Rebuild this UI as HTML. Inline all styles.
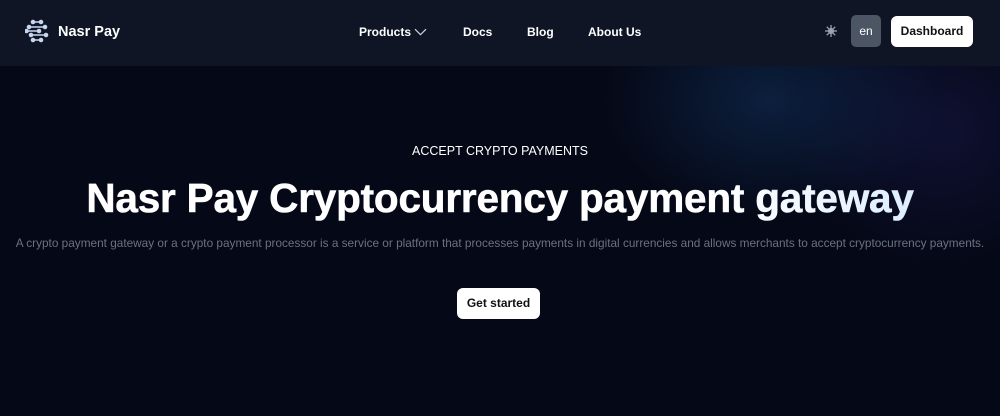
<!DOCTYPE html>
<html><head><meta charset="utf-8"><style>
*{margin:0;padding:0;box-sizing:border-box}
body{width:1000px;height:416px;overflow:hidden;font-family:"Liberation Sans",sans-serif;background:#050816;position:relative;color:#fff}
.glow{position:absolute;left:0;top:0;width:1000px;height:416px;background:radial-gradient(ellipse 170px 120px at 770px 100px,rgba(20,60,110,.45),transparent 100%),radial-gradient(ellipse 150px 140px at 940px 130px,rgba(30,30,90,.4),transparent 100%)}
nav{position:absolute;left:0;top:0;width:1000px;height:66px;background:#0f1524}
.logo{position:absolute;left:25px;top:19px}
.brand{position:absolute;left:58px;top:24px;font-weight:bold;font-size:14.5px}
.links a{position:absolute;top:25px;font-size:12px;font-weight:bold;color:#fff}
.en{position:absolute;left:851px;top:15px;width:30px;height:32px;background:#4b5563;border-radius:5px;font-size:12px;text-align:center;line-height:32px}
.dash{position:absolute;left:891px;top:16px;width:82px;height:31px;background:#fff;border-radius:6px;color:#111;font-size:12px;font-weight:bold;text-align:center;line-height:31px}
.kick{position:absolute;top:144px;width:1000px;text-align:center;font-size:12.5px}
h1{position:absolute;top:175px;width:1000px;text-align:center;font-size:40.5px;font-weight:900;letter-spacing:-.2px;-webkit-text-stroke:.6px currentColor;background:linear-gradient(90deg,#fff 0%,#fff 72%,#e0efff 90%);-webkit-background-clip:text;color:transparent}
.sub{position:absolute;top:236px;width:1000px;text-align:center;font-size:11.8px;color:#6b7280}
.btn{position:absolute;left:457px;top:288px;width:83px;height:31px;background:#fff;border-radius:6px;color:#111;font-size:12px;font-weight:bold;text-align:center;line-height:31px}
</style></head><body>
<div class="glow"></div>
<nav>
<svg class="logo" width="24" height="24" viewBox="0 0 24 24" fill="none" stroke="#c7d7f0" stroke-width="1.6" stroke-linecap="round">
<line x1="8" y1="3" x2="16" y2="3"/><line x1="4" y1="8" x2="20" y2="8"/><line x1="1" y1="12" x2="14" y2="12"/><line x1="6" y1="16" x2="21" y2="16"/><line x1="8" y1="21" x2="16" y2="21"/>
<g fill="#c7d7f0"><circle cx="8" cy="3" r="1.5"/><circle cx="16" cy="3" r="1.5"/><circle cx="4" cy="8" r="1.5"/><circle cx="20" cy="8" r="1.5"/><circle cx="1.5" cy="12" r="1.5"/><circle cx="14" cy="12" r="1.5"/><circle cx="6" cy="16" r="1.5"/><circle cx="21" cy="16" r="1.5"/><circle cx="8" cy="21" r="1.5"/><circle cx="16" cy="21" r="1.5"/></g></svg>
<div class="brand">Nasr Pay</div>
<div class="links">
<a style="left:359px">Products</a>
<svg style="position:absolute;left:414px;top:28px" width="13" height="8" viewBox="0 0 13 8" fill="none" stroke="#cbd5e1" stroke-width="1.2"><path d="M1 1.2l5.5 5.5 5.5-5.5"/></svg>
<a style="left:463px">Docs</a><a style="left:527px">Blog</a><a style="left:588px">About Us</a>
</div>
<svg style="position:absolute;left:825px;top:25px" width="12" height="12" viewBox="0 0 12 12"><circle cx="6" cy="6" r="3" fill="#9ca3af"/><g stroke="#9ca3af" stroke-width="1.3"><line x1="6" y1="0" x2="6" y2="12"/><line x1="0" y1="6" x2="12" y2="6"/><line x1="1.8" y1="1.8" x2="10.2" y2="10.2"/><line x1="10.2" y1="1.8" x2="1.8" y2="10.2"/></g></svg>
<div class="en">en</div>
<div class="dash">Dashboard</div>
</nav>
<div class="kick">ACCEPT CRYPTO PAYMENTS</div>
<h1>Nasr Pay Cryptocurrency payment gateway</h1>
<div class="sub">A crypto payment gateway or a crypto payment processor is a service or platform that processes payments in digital currencies and allows merchants to accept cryptocurrency payments.</div>
<div class="btn">Get started</div>
</body></html>
